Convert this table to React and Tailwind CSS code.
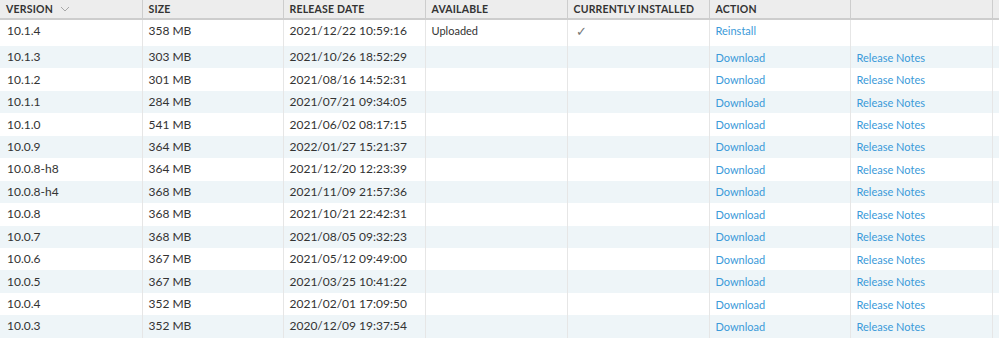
import React from 'react'

const rows = [
    { version: '10.1.4', size: '358 MB', date: '2021/12/22 10:59:16', available: 'Uploaded', installed: true, action: 'Reinstall', notes: '' },
    { version: '10.1.3', size: '303 MB', date: '2021/10/26 18:52:29' },
    { version: '10.1.2', size: '301 MB', date: '2021/08/16 14:52:31' },
    { version: '10.1.1', size: '284 MB', date: '2021/07/21 09:34:05' },
    { version: '10.1.0', size: '541 MB', date: '2021/06/02 08:17:15' },
    { version: '10.0.9', size: '364 MB', date: '2022/01/27 15:21:37' },
    { version: '10.0.8-h8', size: '364 MB', date: '2021/12/20 12:23:39' },
    { version: '10.0.8-h4', size: '368 MB', date: '2021/11/09 21:57:36' },
    { version: '10.0.8', size: '368 MB', date: '2021/10/21 22:42:31' },
    { version: '10.0.7', size: '368 MB', date: '2021/08/05 09:32:23' },
    { version: '10.0.6', size: '367 MB', date: '2021/05/12 09:49:00' },
    { version: '10.0.5', size: '367 MB', date: '2021/03/25 10:41:22' },
    { version: '10.0.4', size: '352 MB', date: '2021/02/01 17:09:50' },
    { version: '10.0.3', size: '352 MB', date: '2020/12/09 19:37:54' },
]

const headers = ['VERSION', 'SIZE', 'RELEASE DATE', 'AVAILABLE', 'CURRENTLY INSTALLED', 'ACTION', '']
const widths = ['w-[142px]', 'w-[141px]', 'w-[142px]', 'w-[142px]', 'w-[142px]', 'w-[141px]', 'w-[142px]']

const App = () => {
    return (
        <div className="w-[999px] h-[338px] overflow-hidden bg-white text-[#333333]" style={{ fontFamily: 'Lato, "Liberation Sans", sans-serif' }}>
            <table className="table-fixed border-collapse w-[999px]">
                <thead>
                    <tr className="h-[19px] bg-[#ededed]">
                        {headers.map((h, i) => (
                            <th key={i} className={`${widths[i]} border-r border-b-2 border-[#cdcdcd] px-[6px] text-left text-[10.5px] font-bold tracking-[0.2px] leading-none align-middle text-[#333]`}>
                                {h === 'VERSION' ? (
                                    <span className="flex items-center gap-[7px]">
                                        VERSION
                                        <svg width="10" height="6" viewBox="0 0 10 6" fill="none">
                                            <path d="M1 1l4 4 4-4" stroke="#a8a8a8" strokeWidth="1" />
                                        </svg>
                                    </span>
                                ) : h}
                            </th>
                        ))}
                        <th className="border-b-2 border-[#cdcdcd]"></th>
                    </tr>
                </thead>
                <tbody>
                    {rows.map((r, idx) => {
                        const cell = idx === 0
                            ? 'border-r border-[#e6e6e6] px-[6px] align-top pt-[5px]'
                            : 'border-r border-[#e6e6e6] px-[6px] align-middle'
                        return (
                            <tr key={r.version} className={`${idx === 0 ? 'h-[27px]' : 'h-[22.45px]'} ${idx % 2 === 0 ? 'bg-white' : 'bg-[#eef5f8]'} text-[12px] leading-none`}>
                                <td className={`${cell} pl-[7px]`}>{r.version}</td>
                                <td className={cell}>{r.size}</td>
                                <td className={cell}>{r.date}</td>
                                <td className={`${cell} text-[11px]`}>{r.available || ''}</td>
                                <td className={cell}>
                                    {r.installed ? <span className="pl-[2px] text-[13px] text-[#777]">✓</span> : ''}
                                </td>
                                <td className={`${cell} text-[11px] text-[#3b9ad9]`}>{r.action || 'Download'}</td>
                                <td className={`${cell} text-[11px] text-[#3b9ad9]`}>{r.notes === '' ? '' : 'Release Notes'}</td>
                                <td></td>
                            </tr>
                        )
                    })}
                </tbody>
            </table>
        </div>
    )
}

export default App
